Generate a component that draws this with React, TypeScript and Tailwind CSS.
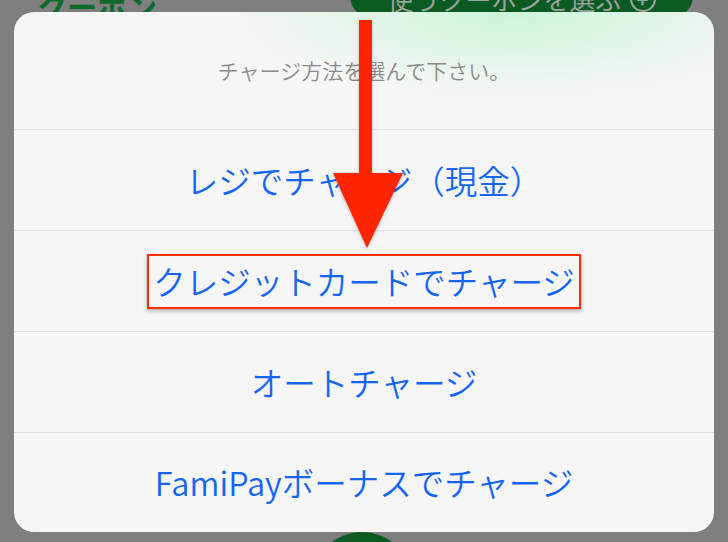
import React from "react";

const FONT = "font-['Noto_Sans_CJK_JP','Noto_Sans',sans-serif]";

function Row({ children, last }: { children: React.ReactNode; last?: boolean }) {
  return (
    <div
      className={`flex items-center justify-center border-t border-[#dedede] ${last ? "h-[100px]" : "h-[101px]"}`}
    >
      {children}
    </div>
  );
}

export default function App() {
  return (
    <div className={`relative w-[728px] h-[542px] overflow-hidden bg-[#7f7f7f] ${FONT}`}>
      {/* dimmed app content behind the sheet */}
      <div className="flex h-full flex-col">
        <div className="mt-[-26px] flex h-[44px] items-end justify-between pl-[37px] pr-[35px]">
          <span className="mb-[-2px] text-[30px] font-bold leading-none text-[#0d6a2b]">クーポン</span>
          <div className="flex h-[44px] w-[343px] items-center justify-center gap-2 rounded-full bg-[#0b5a22] pt-[6px] text-[26px] leading-none text-[#9aa39d]">
            <span>使うクーポンを選ぶ</span>
            <span className="flex h-[26px] w-[26px] items-center justify-center rounded-full border-2 border-[#9aa39d] text-[20px] font-bold">+</span>
          </div>
        </div>
        <div className="flex-1" />
        <div className="flex h-[10px] pl-[312px]">
          <div className="h-[100px] w-[100px] shrink-0 rounded-full bg-[#0b5a22]" />
        </div>
      </div>

      {/* action sheet */}
      <div className="absolute left-[14px] top-[12px] flex h-[520px] w-[700px] flex-col overflow-hidden rounded-[20px] bg-[#f6f6f6]">
        <div className="flex h-[117px] items-center justify-center bg-[radial-gradient(ellipse_280px_85px_at_500px_0px,rgba(204,245,218,1),rgba(246,246,246,0))] text-[21px] font-[350] text-[#8a8a8a]">
          チャージ方法を選んで下さい。
        </div>
        <Row>
          <span className="text-[32.5px] font-[350] leading-none text-[#1565f5]">レジでチャージ（現金）</span>
        </Row>
        <Row>
          <span className="flex h-[55px] items-center border-[2.5px] border-[#ff2a00] px-[4px] text-[32.5px] font-[350] leading-none text-[#1565f5] shadow-[0_2px_4px_rgba(0,0,0,0.3)]">
            クレジットカードでチャージ
          </span>
        </Row>
        <Row>
          <span className="text-[32.5px] font-[350] leading-none text-[#1565f5]">オートチャージ</span>
        </Row>
        <Row last>
          <span className="text-[32.5px] font-[350] leading-none text-[#1565f5]">FamiPayボーナスでチャージ</span>
        </Row>
      </div>

      {/* annotation arrow */}
      <svg
        className="pointer-events-none absolute left-0 top-0"
        width="728"
        height="542"
        viewBox="0 0 728 542"
      >
        <defs>
          <filter id="sh" x="-20%" y="-20%" width="140%" height="140%">
            <feDropShadow dx="0" dy="1" stdDeviation="1.5" floodColor="#000" floodOpacity="0.3" />
          </filter>
        </defs>
        <g filter="url(#sh)" fill="#ff2600">
          <rect x="359" y="20" width="13" height="156" />
          <polygon points="333,173 403,173 367,248" />
        </g>
      </svg>
    </div>
  );
}
